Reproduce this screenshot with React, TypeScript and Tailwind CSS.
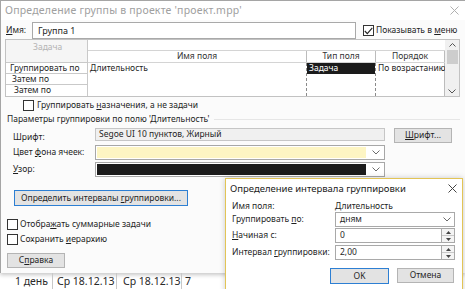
import React from "react";

const U = ({ children }: { children: React.ReactNode }) => (
  <span className="underline decoration-[0.5px] underline-offset-[1px]">{children}</span>
);

function Chevron({ color = "#6b6b6b" }: { color?: string }) {
  return (
    <svg width="8" height="5" viewBox="0 0 8 5">
      <polyline points="0.5,0.5 4,4 7.5,0.5" fill="none" stroke={color} strokeWidth="1" />
    </svg>
  );
}

function ChevronUp() {
  return (
    <svg width="7" height="4" viewBox="0 0 7 4">
      <polyline points="0.5,3.5 3.5,0.5 6.5,3.5" fill="none" stroke="#555" strokeWidth="1" />
    </svg>
  );
}

function CloseX({ color }: { color: string }) {
  return (
    <svg width="9" height="9" viewBox="0 0 9 9">
      <path d="M0.5 0.5 L8.5 8.5 M8.5 0.5 L0.5 8.5" stroke={color} strokeWidth="1" />
    </svg>
  );
}

function Box({ checked = false }: { checked?: boolean }) {
  return (
    <div className="w-[11px] h-[11px] border border-[#333] bg-white flex items-center justify-center shrink-0">
      {checked && (
        <svg width="9" height="8" viewBox="0 0 9 8">
          <polyline points="0.8,4 3.3,6.6 8.3,0.8" fill="none" stroke="#222" strokeWidth="1.1" />
        </svg>
      )}
    </div>
  );
}

function Spinner() {
  return (
    <div className="w-[13px] h-full flex flex-col border-y border-r border-[#a8a8a8] bg-[#f4f4f4]">
      <div className="flex-1 flex items-center justify-center border-b border-[#c8c8c8]">
        <svg width="5" height="3" viewBox="0 0 5 3"><polygon points="0,3 2.5,0 5,3" fill="#444" /></svg>
      </div>
      <div className="flex-1 flex items-center justify-center">
        <svg width="5" height="3" viewBox="0 0 5 3"><polygon points="0,0 5,0 2.5,3" fill="#444" /></svg>
      </div>
    </div>
  );
}

export default function App() {
  return (
    <div className="relative w-[465px] h-[289px] overflow-hidden bg-white text-[8.5px] leading-none text-[#1f1f1f] font-['Noto_Sans',sans-serif] whitespace-nowrap">
      {/* Main dialog */}
      <div className="h-[273px] flex flex-col border-t border-l border-[#a5a5a5] bg-[#fbfbfb] shadow-[0_2px_4px_rgba(0,0,0,0.22)]">
        {/* title */}
        <div className="h-[19px] flex items-center justify-between pl-[4px] pr-[6px] bg-white text-[10.5px] tracking-[0.2px] text-[#a0a0a0]">
          <span>Определение группы в проекте 'проект.mpp'</span>
          <CloseX color="#b0b0b0" />
        </div>
        {/* name row */}
        <div className="mt-[2px] h-[17px] flex items-center">
          <div className="w-[31px] pl-[5px]">
            <U>И</U>мя:
          </div>
          <div className="w-[324px] h-full border border-[#a9a9a9] bg-white flex items-center pl-[5px] text-[9px]">Группа 1</div>
          <div className="ml-[7px] flex items-center">
            <Box checked />
            <span className="ml-[2px]">
              Показывать в <U>м</U>еню
            </span>
          </div>
        </div>
        {/* table */}
        <div className="ml-[4px] w-[455px] h-[58px] border border-[#c2c2c2] bg-white flex">
          <div className="w-[82px] flex flex-col">
            <div className="h-[23px] bg-[#f5f5f5] border-b border-r border-[#c9c9c9] pl-[27px] pt-[3px] text-[#b4b4b4]">Задача</div>
            <div className="h-[11px] border-b border-r border-[#c9c9c9] flex items-center pl-[4px]">Группировать по</div>
            <div className="h-[11px] border-b border-r border-[#c9c9c9] flex items-center pl-[6px]">Затем по</div>
            <div className="h-[11px] border-r border-[#c9c9c9] flex items-center pl-[8px]">Затем по</div>
          </div>
          <div className="w-[357px] flex flex-col">
            <div className="h-[11px] border-b border-[#d4d4d4]"></div>
            <div className="h-[12px] flex border-b border-[#d4d4d4] text-[#333]">
              <div className="w-[219px] border-r border-[#bcbcbc] flex items-center justify-center">Имя поля</div>
              <div className="w-[69px] border-r border-[#bcbcbc] flex items-center justify-center">Тип поля</div>
              <div className="w-[69px] border-r border-[#bcbcbc] flex items-center justify-center">Порядок</div>
            </div>
            <div className="flex-1 flex">
              <div className="w-[219px] border-r border-dashed border-[#8a8a8a]">
                <div className="h-[11px] flex items-center pl-[2px]">Длительность</div>
              </div>
              <div className="w-[69px] border-r border-dashed border-[#8a8a8a]">
                <div className="h-[11px] flex items-center pl-[2px] bg-[#1b1b1b] text-white">Задача</div>
              </div>
              <div className="w-[69px] border-r border-[#bcbcbc]">
                <div className="h-[11px] flex items-center pl-[2px]">По возрастанию</div>
              </div>
            </div>
          </div>
          <div className="w-[14px] bg-[#f0f0f0] flex flex-col items-center">
            <div className="h-[10px] flex items-center justify-center">
              <ChevronUp />
            </div>
            <div className="w-[11px] h-[14px] bg-[#cdcdcd]"></div>
            <div className="flex-1"></div>
            <div className="h-[10px] flex items-center justify-center">
              <Chevron color="#555" />
            </div>
          </div>
        </div>
        {/* group assignments checkbox */}
        <div className="mt-[3px] h-[11px] flex items-center pl-[22px]">
          <Box />
          <span className="ml-[3px]">
            Группировать <U>н</U>азначения, а не задачи
          </span>
        </div>
        {/* section header */}
        <div className="mt-[3px] h-[10px] flex items-center pl-[6px]">
          <span>Параметры группировки по полю 'Длительность'</span>
          <div className="flex-1 h-px bg-[#e6e6e6] ml-[4px] mr-[5px]"></div>
        </div>
        {/* font row */}
        <div className="mt-[4px] h-[15px] flex items-start">
          <div className="w-[94px] pl-[12px] pt-[5px]">Шрифт:</div>
          <div className="w-[290px] h-[13px] border border-[#c6c6c6] bg-[#f0f0f0] flex items-center pl-[3px]">Segoe UI 10 пунктов, Жирный</div>
          <div className="ml-[9px] w-[58px] h-[15px] border border-[#b4b4b4] bg-[#e3e3e3] flex items-center justify-center">
            <span>
              <U>Ш</U>рифт...
            </span>
          </div>
        </div>
        {/* cell color row */}
        <div className="mt-[2px] h-[15px] flex items-center">
          <div className="w-[94px] pl-[12px]">
            Цвет <U>ф</U>она ячеек:
          </div>
          <div className="w-[290px] h-full border border-[#a7a7a7] bg-white flex">
            <div className="flex-1 bg-[#fdf5c3] m-px"></div>
            <div className="w-[17px] flex items-center justify-center">
              <Chevron />
            </div>
          </div>
        </div>
        {/* pattern row */}
        <div className="mt-[2px] h-[15px] flex items-center">
          <div className="w-[94px] pl-[12px]">
            <U>У</U>зор:
          </div>
          <div className="w-[290px] h-full border border-[#a7a7a7] bg-white flex">
            <div className="flex-1 bg-[#1b1b1b] m-px"></div>
            <div className="w-[17px] flex items-center justify-center">
              <Chevron />
            </div>
          </div>
        </div>
        {/* define intervals button */}
        <div className="mt-[13px] ml-[13px] w-[174px] h-[16px] border border-[#2d7fd3] bg-[#e3e3e3] flex items-center justify-center">
          <span>
            Определить интервалы <U>г</U>руппировки...
          </span>
        </div>
        {/* checkboxes */}
        <div className="mt-[13px] h-[11px] flex items-center pl-[6px]">
          <Box />
          <span className="ml-[2px]">
            Отобра<U>ж</U>ать суммарные задачи
          </span>
        </div>
        <div className="mt-[4px] h-[11px] flex items-center pl-[6px]">
          <Box />
          <span className="ml-[2px]">
            Сохранить <U>и</U>ерархию
          </span>
        </div>
        {/* help button */}
        <div className="mt-[8px] ml-[6px] w-[58px] h-[15px] border border-[#b4b4b4] bg-[#e3e3e3] flex items-center justify-center">
          <span>
            С<U>п</U>равка
          </span>
        </div>
      </div>

      {/* underlying grid row */}
      <div className="h-[16px] flex items-center text-[10.5px] text-[#2a2a2a]">
        <div className="w-[53px] h-full flex items-center justify-end pr-[4px] border-r border-[#c8c8c8]">1 день</div>
        <div className="w-[64px] h-full flex items-center pl-[4px] border-r border-[#c8c8c8]">Ср 18.12.13</div>
        <div className="w-[65px] h-full flex items-center pl-[6px] border-r border-[#c8c8c8]">Ср 18.12.13</div>
        <div className="pl-[3px]">7</div>
      </div>

      {/* Sub dialog (window on top) */}
      <div className="absolute left-[225px] top-[178px] w-[238px] h-[125px] border border-[#e2c455] bg-white shadow-[0_0_6px_rgba(0,0,0,0.2)] flex flex-col">
        <div className="h-[19px] flex items-center justify-between pl-[4px] pr-[5px] text-[9.5px] text-[#1a1a1a]">
          <span>Определение интервала группировки</span>
          <CloseX color="#444" />
        </div>
        <div className="mt-[3px] h-[10px] flex items-center">
          <div className="w-[109px] pl-[6px]">Имя поля:</div>
          <div>Длительность</div>
        </div>
        <div className="mt-[1px] h-[15px] flex items-center">
          <div className="w-[109px] pl-[6px]">
            Группировать <U>п</U>о:
          </div>
          <div className="w-[120px] h-full border border-[#a9a9a9] bg-white flex items-center justify-between pl-[4px] pr-[3px]">
            <span>дням</span>
            <Chevron />
          </div>
        </div>
        <div className="mt-[1px] h-[15px] flex items-center">
          <div className="w-[109px] pl-[6px]">
            <U>Н</U>ачиная с:
          </div>
          <div className="w-[107px] h-full border border-[#a9a9a9] bg-white flex items-center pl-[4px]">0</div>
          <Spinner />
        </div>
        <div className="mt-[2px] h-[15px] flex items-center">
          <div className="w-[109px] pl-[6px]">
            Интервал <U>г</U>руппировки:
          </div>
          <div className="w-[107px] h-full border border-[#a9a9a9] bg-white flex items-center pl-[4px]">2,00</div>
          <Spinner />
        </div>
        <div className="mt-[8px] flex items-start">
          <div className="ml-[104px] w-[59px] h-[16px] border border-[#2d7fd3] bg-[#e3e3e3] flex items-center justify-center">OK</div>
          <div className="ml-[8px] w-[57px] h-[15px] border border-[#b4b4b4] bg-[#e3e3e3] flex items-center justify-center">Отмена</div>
        </div>
      </div>
    </div>
  );
}
